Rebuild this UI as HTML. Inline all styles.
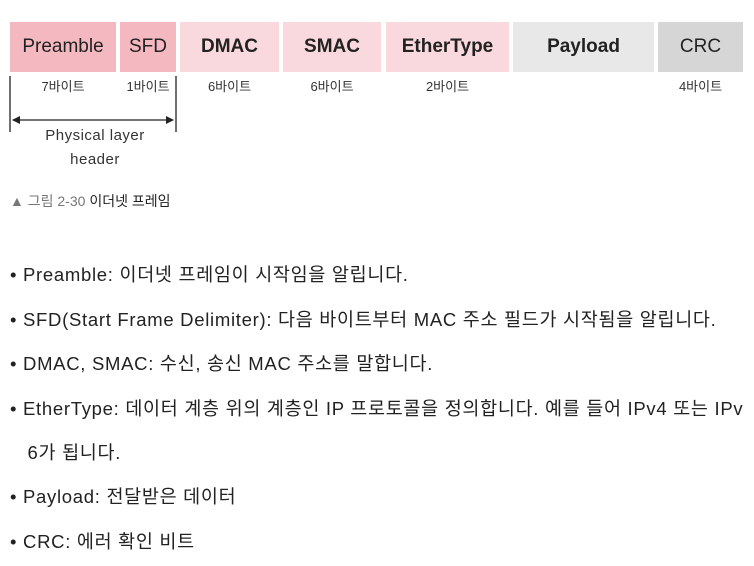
<!DOCTYPE html>
<html><head><meta charset="utf-8"><style>
body{margin:0;width:754px;height:566px;background:#fff;position:relative;overflow:hidden;font-family:"Liberation Sans","Noto Sans CJK KR",sans-serif;color:#222}
.b{position:absolute;top:22px;height:50px;display:flex;align-items:center;justify-content:center;font-size:19px;color:#222}
.s{position:absolute;top:76px;font-size:13px;color:#333;text-align:center}
.l{position:absolute;left:10px;font-size:18.5px;letter-spacing:0.7px;color:#222;white-space:nowrap}
</style></head><body>
<div class="b" style="left:10px;width:106px;background:#f4b8c0">Preamble</div>
<div class="b" style="left:120px;width:56px;background:#f4b8c0">SFD</div>
<div class="b" style="left:180px;width:99px;background:#fad9de;font-weight:bold">DMAC</div>
<div class="b" style="left:283px;width:98px;background:#fad9de;font-weight:bold">SMAC</div>
<div class="b" style="left:386px;width:123px;background:#fad9de;font-weight:bold">EtherType</div>
<div class="b" style="left:513px;width:141px;background:#e8e8e8;font-weight:bold">Payload</div>
<div class="b" style="left:658px;width:85px;background:#d6d6d6">CRC</div>
<div class="s" style="left:10px;width:106px">7바이트</div>
<div class="s" style="left:120px;width:56px">1바이트</div>
<div class="s" style="left:180px;width:99px">6바이트</div>
<div class="s" style="left:283px;width:98px">6바이트</div>
<div class="s" style="left:386px;width:123px">2바이트</div>
<div class="s" style="left:658px;width:85px">4바이트</div>
<svg style="position:absolute;left:0;top:0" width="200" height="140">
<line x1="10" y1="76" x2="10" y2="132" stroke="#222" stroke-width="1.3"/>
<line x1="176" y1="76" x2="176" y2="132" stroke="#222" stroke-width="1.3"/>
<line x1="13" y1="120" x2="173" y2="120" stroke="#222" stroke-width="1.3"/>
<path d="M12 120 L20 116 L20 124Z M174 120 L166 116 L166 124Z" fill="#222"/>
</svg>
<div style="position:absolute;left:30px;top:124px;width:130px;text-align:center;font-size:15px;letter-spacing:0.5px;line-height:24px;color:#333">Physical layer<br>header</div>
<div style="position:absolute;left:10px;top:191px;font-size:14px;color:#777">▲ 그림 2-30 <span style="color:#222">이더넷 프레임</span></div>
<div class="l" style="top:261px">• Preamble: 이더넷 프레임이 시작임을 알립니다.</div>
<div class="l" style="top:306px">• SFD(Start Frame Delimiter): 다음 바이트부터 MAC 주소 필드가 시작됨을 알립니다.</div>
<div class="l" style="top:350px">• DMAC, SMAC: 수신, 송신 MAC 주소를 말합니다.</div>
<div class="l" style="top:395px">• EtherType: 데이터 계층 위의 계층인 IP 프로토콜을 정의합니다. 예를 들어 IPv4 또는 IPv</div>
<div class="l" style="top:439px">&nbsp;&nbsp;&nbsp;6가 됩니다.</div>
<div class="l" style="top:483px">• Payload: 전달받은 데이터</div>
<div class="l" style="top:528px">• CRC: 에러 확인 비트</div>
</body></html>
